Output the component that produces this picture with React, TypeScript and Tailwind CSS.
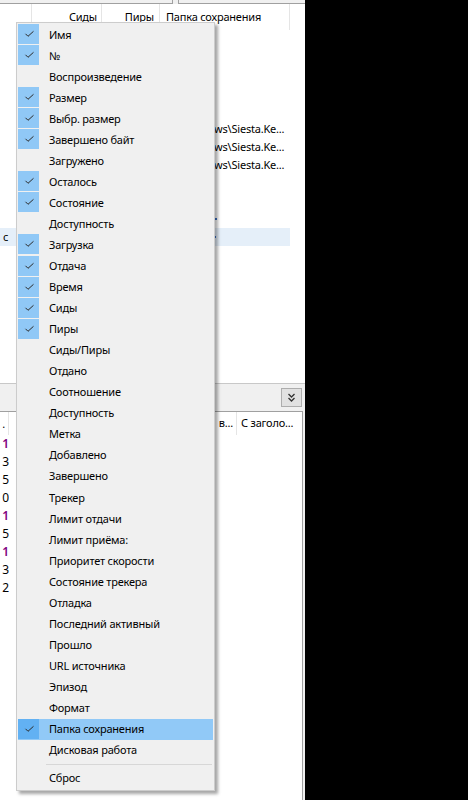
import { ReactNode } from "react";

type Item = { label: string; checked?: boolean; hover?: boolean };

const items: Item[] = [
  { label: "Имя", checked: true },
  { label: "№", checked: true },
  { label: "Воспроизведение" },
  { label: "Размер", checked: true },
  { label: "Выбр. размер", checked: true },
  { label: "Завершено байт", checked: true },
  { label: "Загружено" },
  { label: "Осталось", checked: true },
  { label: "Состояние", checked: true },
  { label: "Доступность" },
  { label: "Загрузка", checked: true },
  { label: "Отдача", checked: true },
  { label: "Время", checked: true },
  { label: "Сиды", checked: true },
  { label: "Пиры", checked: true },
  { label: "Сиды/Пиры" },
  { label: "Отдано" },
  { label: "Соотношение" },
  { label: "Доступность" },
  { label: "Метка" },
  { label: "Добавлено" },
  { label: "Завершено" },
  { label: "Трекер" },
  { label: "Лимит отдачи" },
  { label: "Лимит приёма:" },
  { label: "Приоритет скорости" },
  { label: "Состояние трекера" },
  { label: "Отладка" },
  { label: "Последний активный" },
  { label: "Прошло" },
  { label: "URL источника" },
  { label: "Эпизод" },
  { label: "Формат" },
  { label: "Папка сохранения", checked: true, hover: true },
  { label: "Дисковая работа" },
];

const lowerRows: { ch: string; purple?: boolean }[] = [
  { ch: "1", purple: true },
  { ch: "3" },
  { ch: "5" },
  { ch: "0" },
  { ch: "1", purple: true },
  { ch: "5" },
  { ch: "1", purple: true },
  { ch: "3" },
  { ch: "2" },
];

function Check() {
  return (
    <svg width="21" height="20" viewBox="0 0 21 20">
      <polyline
        points="7.5,9.8 10,12.3 15.5,7.3"
        fill="none"
        stroke="#2b2b2b"
        strokeWidth="1"
      />
    </svg>
  );
}

function MenuItem({ label, checked, hover }: Item) {
  return (
    <div
      className={`mx-[1px] flex h-[21.06px] items-start ${hover ? "bg-[#91c9f7]" : ""}`}
    >
      <div
        className={`flex h-[20px] w-[21px] shrink-0 ${
          checked ? (hover ? "bg-[#62b1f3]" : "bg-[#90c8f6]") : ""
        }`}
      >
        {checked && <Check />}
      </div>
      <span className="flex h-[20px] items-center pl-[10px] leading-none text-black">
        {label}
      </span>
    </div>
  );
}

function Row({ children, className = "" }: { children?: ReactNode; className?: string }) {
  return <div className={`relative flex h-[18px] items-center ${className}`}>{children}</div>;
}

export default function App() {
  return (
    <div className="flex h-[800px] w-[468px] overflow-hidden bg-black font-['Noto_Sans',sans-serif] text-[11px] tracking-[-0.2px] text-black">
      <div className="relative flex h-full w-[305px] flex-col bg-white">
        {/* top edit boxes */}
        <div className="flex h-[4px] bg-[#f0f0f0]">
          <div className="w-[173px] border-b border-r border-[#a0a0a0]" />
          <div className="w-[5px]" />
          <div className="flex-1 border-b border-l border-[#a0a0a0]" />
        </div>

        {/* upper list header */}
        <div className="flex h-[26px] items-center">
          <div className="h-full w-[32px] border-r border-[#e5e5e5]" />
          <div className="flex h-full w-[70px] items-center justify-end border-r border-[#e5e5e5] pr-[4px]">
            Сиды
          </div>
          <div className="flex h-full w-[58px] items-center justify-end border-r border-[#e5e5e5] pr-[5px]">
            Пиры
          </div>
          <div className="flex h-full w-[130px] items-center border-r border-[#e5e5e5] pl-[6px]">
            Папка сохранения
          </div>
        </div>

        {/* upper list body */}
        <div className="flex flex-1 flex-col">
          <Row />
          <Row />
          <Row />
          <Row />
          <Row />
          <Row className="pl-[214px]">ws\Siesta.Ke...</Row>
          <Row className="pl-[214px]">ws\Siesta.Ke...</Row>
          <Row className="pl-[214px]">ws\Siesta.Ke...</Row>
          <Row />
          <Row />
          <Row>
            <div className="ml-[215px] h-[2px] w-[2px] bg-[#3a6fc4]" />
          </Row>
          <Row className="w-[290px] bg-[#e5eff9]">
            <span className="pl-[3px]">c</span>
            <div className="ml-[206px] h-[2px] w-[2px] bg-[#3a6fc4]" />
          </Row>
        </div>

        {/* splitter toolbar */}
        <div className="flex h-[28px] shrink-0 items-start border-t border-[#c8c8c8] bg-[#f0f0f0]">
          <div className="flex-1" />
          <div className="mr-[3px] mt-[4px] flex h-[19px] w-[21px] items-center justify-center border border-[#adadad] bg-[#e1e1e1]">
            <svg width="9" height="9" viewBox="0 0 9 9">
              <polyline points="1.5,1 4.5,4 7.5,1" fill="none" stroke="#333" strokeWidth="1.3" />
              <polyline points="1.5,5 4.5,8 7.5,5" fill="none" stroke="#333" strokeWidth="1.3" />
            </svg>
          </div>
        </div>

        {/* lower list */}
        <div className="flex h-[389px] shrink-0 bg-[#f0f0f0]">
          <div className="flex flex-1 flex-col border-r border-t border-[#a0a0a0] bg-white">
            <div className="flex h-[23px] shrink-0">
              <div className="relative h-full w-[9px] overflow-hidden border-r border-[#e5e5e5]">
                <span className="absolute right-[3px] top-[4px]">.</span>
              </div>
              <div className="flex h-full w-[6px] items-start">
                <div className="ml-[6px] mt-[6px] h-[12px] w-[1px] bg-[#f3e7a8]" />
              </div>
              <div className="flex h-full w-[222px] items-center justify-end border-r border-[#e5e5e5] pr-[3px]">
                в...
              </div>
              <div className="flex h-full flex-1 items-center pl-[4px]">С заголо...</div>
            </div>
            {lowerRows.map((r, i) => (
              <div key={i} className="relative h-[18px] w-[9px] shrink-0 overflow-hidden">
                <span
                  className={`absolute right-[0px] top-0 text-[12px] leading-[18px] ${
                    r.purple ? "font-semibold text-[#800080]" : ""
                  }`}
                >
                  {r.ch}
                </span>
              </div>
            ))}
          </div>
          <div className="w-[2px]" />
        </div>

        {/* context menu */}
        <div className="absolute left-[16px] top-[22px] w-[199px] border border-[#cccccc] bg-[#f0f0f0] pb-[1px] pt-[1px] shadow-[3px_3px_3px_rgba(0,0,0,0.35)]">
          {items.map((it, i) => (
            <MenuItem key={i} {...it} />
          ))}
          <div className="flex h-[7px] items-center pl-[29px] pr-[2px]">
            <div className="h-[1px] flex-1 bg-[#d7d7d7]" />
          </div>
          <MenuItem label="Сброс" />
        </div>
      </div>
    </div>
  );
}
